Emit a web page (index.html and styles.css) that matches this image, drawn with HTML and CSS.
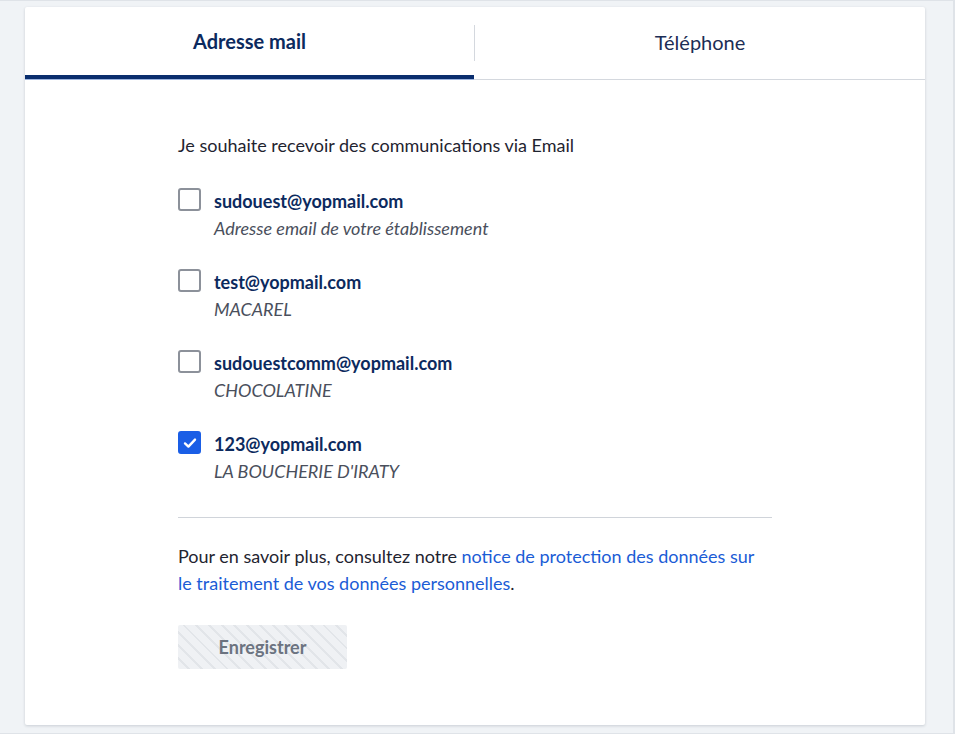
FILE: index.html
```html
<!DOCTYPE html>
<html lang="fr">
<head>
<meta charset="utf-8">
<link rel="stylesheet" href="styles.css">
</head>
<body>
<div class="frame">
  <div class="card">
    <div class="tabs">
      <div class="tab active"><span class="tab-label">Adresse mail</span></div>
      <div class="tab"><span class="tab-label sep">Téléphone</span></div>
    </div>
    <div class="content">
      <p class="intro">Je souhaite recevoir des communications via Email</p>
      <ul class="list">
        <li class="item">
          <span class="box"></span>
          <div class="text">
            <div class="email">sudouest@yopmail.com</div>
            <div class="sub">Adresse email de votre établissement</div>
          </div>
        </li>
        <li class="item">
          <span class="box"></span>
          <div class="text">
            <div class="email">test@yopmail.com</div>
            <div class="sub">MACAREL</div>
          </div>
        </li>
        <li class="item">
          <span class="box"></span>
          <div class="text">
            <div class="email">sudouestcomm@yopmail.com</div>
            <div class="sub">CHOCOLATINE</div>
          </div>
        </li>
        <li class="item">
          <span class="box checked"><svg width="16" height="16" viewBox="0 0 16 16"><path d="M3 8.4 L6.4 11.6 L13 4.6" fill="none" stroke="#fff" stroke-width="2.4" stroke-linecap="round" stroke-linejoin="round"/></svg></span>
          <div class="text">
            <div class="email">123@yopmail.com</div>
            <div class="sub">LA BOUCHERIE D'IRATY</div>
          </div>
        </li>
      </ul>
      <hr class="divider">
      <p class="info">Pour en savoir plus, consultez notre <a href="#" class="link">notice de protection des données sur le traitement de vos données personnelles</a>.</p>
      <button class="save" disabled>Enregistrer</button>
    </div>
  </div>
</div>
</body>
</html>
```
FILE: styles.css
```css
html, body {
  margin: 0;
  padding: 0;
  height: 100%;
}
body {
  background: #f0f3f6;
  font-family: Lato, "Open Sans", sans-serif;
  color: #1f2430;
}
.frame {
  box-sizing: border-box;
  height: 734px;
  border-top: 1px solid #dfe3e8;
  border-right: 2px solid #dfe3e8;
  border-bottom: 1px solid #dfe3e8;
  padding: 6px 0 0 25px;
}
.card {
  width: 900px;
  height: 718px;
  background: #fff;
  box-shadow: 0 1px 3px rgba(30, 40, 60, 0.18);
  border-radius: 2px;
}
.tabs {
  display: flex;
  height: 73px;
  box-sizing: border-box;
  border-bottom: 1px solid #d4d8de;
}
.tab {
  flex: 0 0 449px;
  display: flex;
  align-items: center;
  justify-content: center;
  box-sizing: border-box;
  position: relative;
  font-size: 20px;
  color: #1c2d55;
}
.tab + .tab {
  flex: 1 1 auto;
  border-left: 1px solid #d4d8de;
  margin: 18px 0 18px;
  padding-bottom: 3px;
}
.tab.active {
  font-weight: 700;
  color: #0c2a5e;
  border-bottom: 4px solid #0a2e6e;
  padding-top: 0;
}
.tab.active::after {
  content: "";
  position: absolute;
  left: 0;
  right: 0;
  bottom: -5px;
  height: 1px;
  background: #9db4de;
}
.content {
  padding: 53px 0 0 153px;
  width: 594px;
}
.intro {
  margin: 0;
  font-size: 18px;
  line-height: 24px;
}
.list {
  list-style: none;
  margin: 30px 0 0;
  padding: 0;
}
.item {
  display: flex;
  gap: 13px;
  height: 81px;
}
.box {
  flex: 0 0 auto;
  box-sizing: border-box;
  width: 23px;
  height: 23px;
  margin-top: 1px;
  border: 2px solid #8c919a;
  border-radius: 3px;
  display: flex;
  align-items: center;
  justify-content: center;
}
.box.checked {
  background: #1a5ee6;
  border-color: #1a5ee6;
}
.text {
  padding-top: 2px;
}
.email {
  font-size: 18px;
  font-weight: 700;
  color: #0c2a5e;
  line-height: 24px;
}
.sub {
  font-size: 18px;
  font-style: italic;
  color: #4a4f5c;
  line-height: 30px;
}
.divider {
  margin: 6px 0 0;
  border: 0;
  border-top: 1px solid #d0d4da;
}
.info {
  margin: 25px 0 0;
  font-size: 18px;
  line-height: 27px;
}
.link {
  color: #1b5cd6;
  text-decoration: none;
}
.save {
  display: block;
  margin-top: 28px;
  width: 169px;
  height: 44px;
  border: 0;
  border-radius: 2px;
  font-family: Lato, "Open Sans", sans-serif;
  font-size: 18px;
  font-weight: 700;
  color: #6b7380;
  background-color: #eff1f4;
  background-image: repeating-linear-gradient(45deg, #eff1f4 0, #eff1f4 7px, #e2e5e9 7px, #e2e5e9 9px);
}
```
